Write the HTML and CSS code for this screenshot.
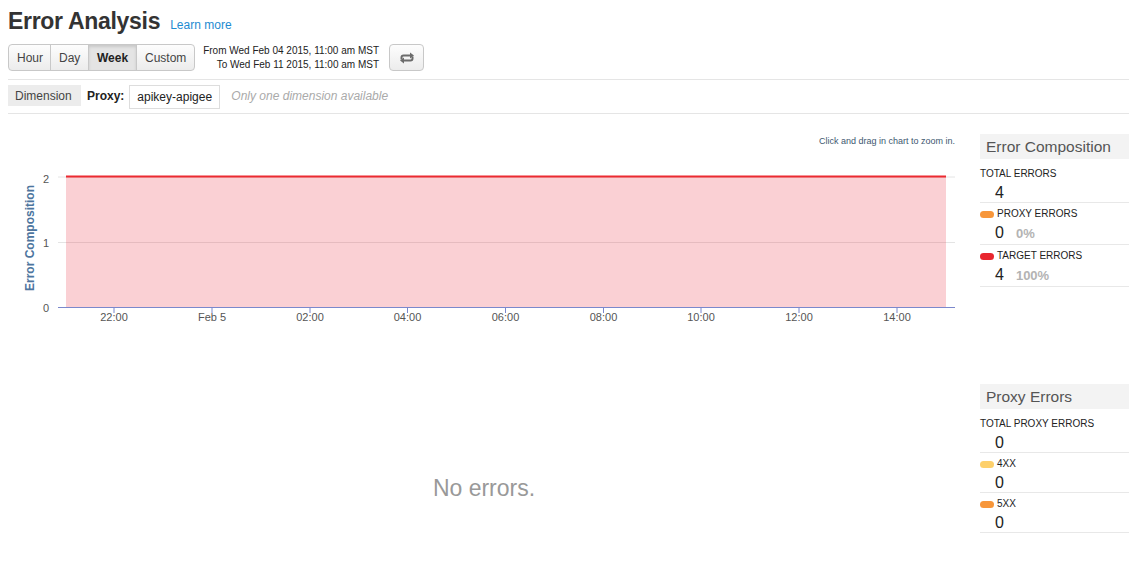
FILE: index.html
```html
<!DOCTYPE html>
<html lang="en">
<head>
<meta charset="utf-8">
<title>Error Analysis</title>
<link rel="stylesheet" href="styles.css">
</head>
<body>
<div class="page">
  <header class="title-row">
    <h1 class="title">Error Analysis</h1>
    <a class="learn" href="#">Learn more</a>
  </header>

  <div class="toolbar">
    <div class="btn-group">
      <button class="btn">Hour</button>
      <button class="btn">Day</button>
      <button class="btn active">Week</button>
      <button class="btn">Custom</button>
    </div>
    <div class="range">
      <div>From Wed Feb 04 2015, 11:00 am MST</div>
      <div>To Wed Feb 11 2015, 11:00 am MST</div>
    </div>
    <button class="btn refresh" aria-label="Refresh">
      <svg width="14" height="12" viewBox="0 0 14 12">
        <path d="M1.5 7.5V5.5Q1.5 3.5 3.5 3.5H10.5" fill="none" stroke="#6b6b6b" stroke-width="2"/>
        <polygon points="10,0.5 14,3.5 10,6.5" fill="#6b6b6b"/>
        <path d="M12.5 4.5V6.5Q12.5 8.5 10.5 8.5H3.5" fill="none" stroke="#6b6b6b" stroke-width="2"/>
        <polygon points="4,5.5 0,8.5 4,11.5" fill="#6b6b6b"/>
      </svg>
    </button>
  </div>

  <div class="dim-row">
    <span class="dim-label">Dimension</span>
    <span class="proxy-label">Proxy:</span>
    <span class="proxy-value">apikey-apigee</span>
    <span class="dim-hint">Only one dimension available</span>
  </div>

  <section class="section first">
    <div class="chart-col">
      <svg class="chart" width="952" height="210" viewBox="0 0 952 210">
        <text class="subtitle" x="947" y="24" text-anchor="end">Click and drag in chart to zoom in.</text>
        <path d="M50 57H947M50 122.5H947" stroke="#e4e4e4" stroke-width="1"/>
        <rect x="58" y="56.5" width="880" height="131" fill="#e8283c" fill-opacity="0.22"/>
        <path d="M58 56.5H938" stroke="#ec2a30" stroke-width="2.2"/>
        <path d="M50 187.5H947" stroke="#7b88cc" stroke-width="1"/>
        <path d="M106 188V193M204 188V193M302 188V193M399.5 188V193M497.5 188V193M595.5 188V193M693 188V193M791 188V193M889 188V193" stroke="#7b88cc" stroke-width="1"/>
        <g class="ylab" text-anchor="end">
          <text x="41" y="63">2</text>
          <text x="41" y="127">1</text>
          <text x="41" y="192">0</text>
        </g>
        <g class="xlab" text-anchor="middle">
          <text x="106" y="201">22:00</text>
          <text x="204" y="201">Feb 5</text>
          <text x="302" y="201">02:00</text>
          <text x="399.5" y="201">04:00</text>
          <text x="497.5" y="201">06:00</text>
          <text x="595.5" y="201">08:00</text>
          <text x="693" y="201">10:00</text>
          <text x="791" y="201">12:00</text>
          <text x="889" y="201">14:00</text>
        </g>
        <text class="ytitle" x="0" y="0" text-anchor="middle" transform="translate(25.5 118) rotate(-90)">Error Composition</text>
      </svg>
    </div>
    <aside class="summary">
      <h2 class="summary-head">Error Composition</h2>
      <div class="item">
        <div class="item-label">TOTAL ERRORS</div>
        <div class="item-value">4</div>
      </div>
      <div class="item tall">
        <div class="item-label"><span class="swatch orange"></span>PROXY ERRORS</div>
        <div class="item-value">0<span class="pct">0%</span></div>
      </div>
      <div class="item tall">
        <div class="item-label"><span class="swatch red"></span>TARGET ERRORS</div>
        <div class="item-value">4<span class="pct">100%</span></div>
      </div>
    </aside>
  </section>

  <section class="section second">
    <div class="chart-col empty">
      <div class="no-errors">No errors.</div>
    </div>
    <aside class="summary">
      <h2 class="summary-head">Proxy Errors</h2>
      <div class="item">
        <div class="item-label">TOTAL PROXY ERRORS</div>
        <div class="item-value">0</div>
      </div>
      <div class="item">
        <div class="item-label"><span class="swatch yellow"></span>4XX</div>
        <div class="item-value">0</div>
      </div>
      <div class="item">
        <div class="item-label"><span class="swatch orange"></span>5XX</div>
        <div class="item-value">0</div>
      </div>
    </aside>
  </section>
</div>
</body>
</html>
```

FILE: styles.css
```css
* { box-sizing: border-box; }

html, body {
  margin: 0;
  padding: 0;
  background: #fff;
}

body {
  font-family: "Liberation Sans", Arial, Helvetica, sans-serif;
  color: #333;
}

.page {
  padding-left: 8px;
  width: 1129px;
  overflow: hidden;
}

/* title */
.title-row {
  display: flex;
  align-items: baseline;
  gap: 10px;
  padding-top: 7px;
  height: 44px;
}

.title {
  margin: 0;
  font-size: 23px;
  line-height: 28px;
  font-weight: bold;
  letter-spacing: -0.3px;
  color: #333;
}

.learn {
  font-size: 12px;
  color: #1e8bd1;
  text-decoration: none;
}

/* toolbar */
.toolbar {
  display: flex;
  align-items: flex-start;
  height: 27px;
  margin-bottom: 8px;
}

.btn-group {
  display: flex;
}

.btn {
  font-family: inherit;
  font-size: 12px;
  color: #444;
  height: 27px;
  padding: 0 8px;
  margin: 0;
  border: 1px solid #c8c8c8;
  background: linear-gradient(#fdfdfd, #ececec);
  cursor: pointer;
}

.btn-group .btn {
  border-radius: 0;
  margin-left: -1px;
}

.btn-group .btn:first-child {
  margin-left: 0;
  border-radius: 4px 0 0 4px;
}

.btn-group .btn:last-child {
  border-radius: 0 4px 4px 0;
}

.btn-group .btn:nth-child(1) { width: 43px; }
.btn-group .btn:nth-child(2) { width: 39px; }
.btn-group .btn:nth-child(3) { width: 49px; }
.btn-group .btn:nth-child(4) { width: 59px; }

.btn.active {
  background: #e4e4e4;
  font-weight: bold;
  color: #222;
  box-shadow: inset 0 2px 3px rgba(0, 0, 0, 0.12);
}

.range {
  margin-left: 6px;
  width: 178px;
  text-align: right;
  font-size: 10px;
  line-height: 13.5px;
  color: #222;
}

.refresh {
  margin-left: 10px;
  width: 35px;
  border-radius: 4px;
  display: flex;
  align-items: center;
  justify-content: center;
  padding: 0;
}

/* dimension row */
.dim-row {
  display: flex;
  align-items: flex-start;
  border-top: 1px solid #e5e5e5;
  border-bottom: 1px solid #e5e5e5;
  padding: 5px 0 4px;
  height: 35px;
  font-size: 12px;
}

.dim-label {
  background: #ececec;
  color: #444;
  height: 21px;
  line-height: 23px;
  padding: 0 7px;
  width: 73px;
}

.proxy-label {
  font-weight: bold;
  color: #222;
  margin-left: 6px;
  line-height: 23px;
}

.proxy-value {
  margin-left: 5px;
  border: 1px solid #ddd;
  height: 24px;
  line-height: 23px;
  padding: 0 7px;
  color: #222;
  width: 91px;
}

.dim-hint {
  margin-left: 11px;
  font-style: italic;
  color: #aaa;
  line-height: 23px;
}

/* sections */
.section {
  display: flex;
  gap: 20px;
}

.section.first {
  height: 256px;
}

.chart-col {
  flex: 1;
  min-width: 0;
}

.section.first .chart-col {
  padding-top: 6px;
}

.chart {
  display: block;
  font-family: "Liberation Sans", Arial, Helvetica, sans-serif;
}

.subtitle {
  font-size: 9px;
  fill: #3e576f;
}

.ylab text,
.xlab text {
  font-size: 11px;
  fill: #555;
}

.ytitle {
  font-size: 12px;
  font-weight: bold;
  fill: #4d759e;
}

.empty {
  padding-top: 104px;
  text-align: center;
}

.no-errors {
  font-size: 23px;
  line-height: 28px;
  color: #999;
}

/* summary panel */
.summary {
  width: 149px;
  flex: none;
}

.section.first .summary {
  padding-top: 20px;
}

.section.second .summary {
  padding-top: 14px;
}

.summary-head {
  margin: 0 0 4px;
  background: #f3f3f3;
  height: 25px;
  line-height: 25px;
  padding-left: 6px;
  font-size: 15.5px;
  font-weight: normal;
  color: #555;
}

.item {
  padding: 5px 0 0;
  border-bottom: 1px solid #e8e8e8;
  height: 40px;
}

.item.tall {
  height: 42px;
}

.item-label {
  display: flex;
  align-items: center;
  font-size: 10px;
  line-height: 12px;
  color: #222;
}

.swatch {
  display: inline-block;
  width: 14px;
  height: 7px;
  border-radius: 4px;
  margin-right: 3px;
}

.swatch.orange { background: #f7963a; }
.swatch.red { background: #e8262e; }
.swatch.yellow { background: #fdd06b; }

.item-value {
  margin-top: 3px;
  padding-left: 15px;
  font-size: 16px;
  line-height: 19px;
  color: #222;
}

.pct {
  margin-left: 12px;
  font-size: 13px;
  font-weight: bold;
  color: #b3b3b3;
}
```
